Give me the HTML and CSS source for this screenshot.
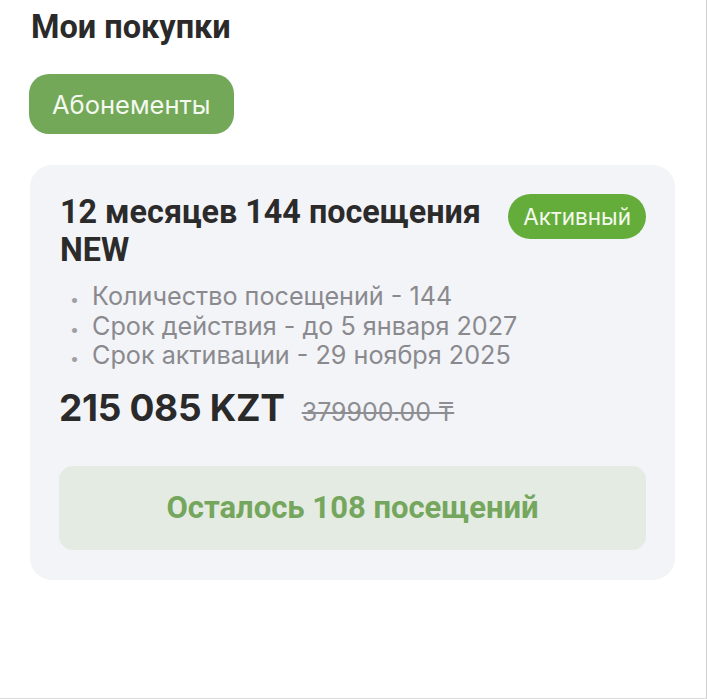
FILE: index.html
```html
<!DOCTYPE html>
<html lang="ru">
<head>
<meta charset="utf-8">
<link rel="stylesheet" href="styles.css">
</head>
<body>
<div class="page">
  <h1 class="title">Мои покупки</h1>
  <div class="tabs">
    <button class="tab">Абонементы</button>
  </div>
  <div class="card">
    <div class="card-head">
      <div class="card-title">12 месяцев 144 посещения NEW</div>
      <div class="badge">Активный</div>
    </div>
    <ul class="details">
      <li>Количество посещений - 144</li>
      <li>Срок действия - до 5 января 2027</li>
      <li>Срок активации - 29 ноября 2025</li>
    </ul>
    <div class="price-row">
      <span class="price">215 085 KZT</span>
      <span class="old-price">379900.00 ₸</span>
    </div>
    <div class="remaining">Осталось 108 посещений</div>
  </div>
</div>
</body>
</html>
```
FILE: styles.css
```css
* { box-sizing: border-box; }
html, body { margin: 0; padding: 0; background: #fff; }
.page {
  width: 707px;
  height: 699px;
  border-right: 1px solid #cfcfcf;
  border-bottom: 1px solid #dcdcdc;
  padding: 8px 31px 0 30px;
  font-family: Inter, "Noto Sans", sans-serif;
  color: #2b2b2b;
}
.title {
  margin: 0;
  font-family: Roboto, Inter, sans-serif;
  font-weight: 700;
  font-size: 32.5px;
  line-height: 38px;
  color: #2a2a2a;
  padding-left: 1px;
}
.tabs { margin-top: 28px; display: flex; }
.tab {
  border: none;
  background: #73a859;
  color: #f4f8ee;
  font-family: Inter, sans-serif;
  font-size: 25.5px;
  height: 60px;
  padding: 0 23px;
  border-radius: 20px;
  margin-left: -1px;
}
.card {
  margin-top: 31px;
  background: #f3f4f8;
  border-radius: 22px;
  padding: 28px 29px 30px 29px;
  width: 645px;
}
.card-head {
  display: flex;
  justify-content: space-between;
  align-items: flex-start;
  gap: 20px;
}
.card-title {
  font-family: Roboto, sans-serif;
  font-weight: 700;
  font-size: 32.3px;
  line-height: 38px;
  color: #2b2b2b;
  width: 430px;
  padding-left: 1px;
}
.badge {
  margin-top: 1px;
  background: #65ad3a;
  color: #f4f9ef;
  font-size: 22.5px;
  height: 45px;
  line-height: 45px;
  padding: 0 15px;
  border-radius: 23px;
  white-space: nowrap;
}
.details {
  list-style: none;
  margin: 13px 0 0 0;
  padding: 0 0 0 10px;
  font-size: 25.2px;
  line-height: 29.5px;
  color: #8a8a8e;
}
.details li { display: flex; align-items: baseline; height: 29.5px; }
.details li::before {
  content: "•";
  width: 22px;
  flex: none;
  font-size: 16px;
  line-height: 16px;
  color: #a0a0a4;
  padding-left: 1px;
}
.price-row {
  margin-top: 15px;
  display: flex;
  align-items: baseline;
  gap: 17px;
}
.price {
  font-family: Inter, sans-serif;
  font-weight: 700;
  font-size: 37px;
  line-height: 44px;
  color: #2a2a2a;
  letter-spacing: -0.3px;
}
.old-price {
  font-size: 25px;
  color: #8e8e92;
  text-decoration: line-through;
}
.remaining {
  margin-top: 36px;
  height: 84px;
  background: #e4ebe3;
  border-radius: 14px;
  display: flex;
  align-items: center;
  justify-content: center;
  font-family: Roboto, sans-serif;
  font-weight: 700;
  font-size: 31px;
  color: #74a65d;
}
```
